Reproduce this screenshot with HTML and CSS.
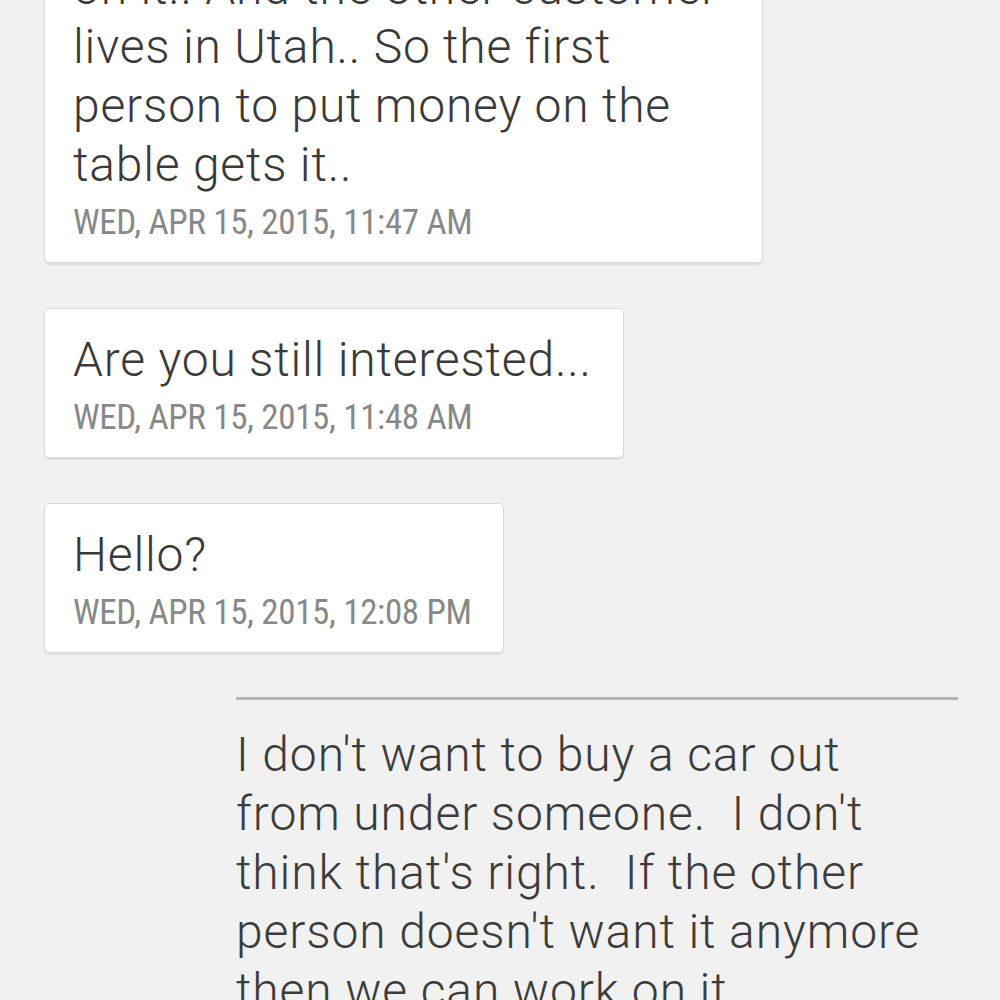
FILE: index.html
```html
<!DOCTYPE html>
<html>
<head>
<meta charset="utf-8">
<link rel="stylesheet" href="styles.css">
</head>
<body>
<div class="thread">
  <div class="bubble bubble-wide">
    <p class="msg">on it.. And the other customer<br>lives in Utah.. So the first<br>person to put money on the<br>table gets it..</p>
    <p class="time">WED, APR 15, 2015, 11:47 AM</p>
  </div>
  <div class="bubble">
    <p class="msg">Are you still interested...</p>
    <p class="time">WED, APR 15, 2015, 11:48 AM</p>
  </div>
  <div class="bubble">
    <p class="msg">Hello?</p>
    <p class="time">WED, APR 15, 2015, 12:08 PM</p>
  </div>
  <div class="outgoing">
    <p class="out-msg">I don't want to buy a car out<br>from under someone.&nbsp; I don't<br>think that's right.&nbsp; If the other<br>person doesn't want it anymore<br>then we can work on it.</p>
  </div>
</div>
</body>
</html>
```
FILE: styles.css
```css
html, body {
  margin: 0;
  padding: 0;
  background: #f1f1f1;
  height: 1000px;
  overflow: hidden;
}

.thread {
  display: flex;
  flex-direction: column;
  align-items: flex-start;
  gap: 45px;
  margin-top: -64px;
  padding-left: 44px;
}

.bubble {
  background: #ffffff;
  border: 1px solid #d9d9d9;
  border-radius: 5px;
  box-shadow: 0 2px 1px rgba(0, 0, 0, 0.07);
  padding: 21px 31px 17px 28px;
}

.bubble-wide {
  box-sizing: border-box;
  width: 719px;
}

.msg {
  margin: 0;
  font-family: Roboto, "Noto Sans", sans-serif;
  font-weight: 300;
  font-size: 48px;
  line-height: 59px;
  letter-spacing: 0.8px;
  color: #3a3a3a;
}

.time {
  margin: 7px 0 0;
  font-family: "Roboto Condensed", "Liberation Sans Narrow", "DejaVu Sans Condensed", sans-serif;
  font-weight: 400;
  font-size: 35px;
  line-height: 44px;
  letter-spacing: -0.35px;
  color: #888888;
  white-space: nowrap;
}

.outgoing {
  margin-left: 192px;
  width: 722px;
  border-top: 3px solid #b5b5b5;
  margin-top: -1px;
  padding-top: 25px;
}

.out-msg {
  margin: 0;
  font-family: Roboto, "Noto Sans", sans-serif;
  font-weight: 300;
  font-size: 48px;
  line-height: 59px;
  letter-spacing: 0.9px;
  color: #3c3c3c;
  white-space: nowrap;
}
```
